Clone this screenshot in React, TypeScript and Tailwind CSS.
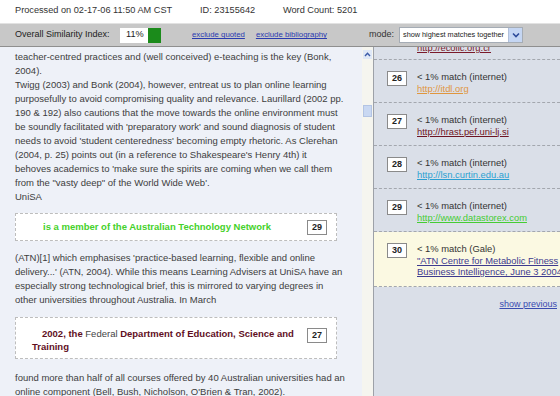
import React from "react";

const NumBox = ({ n }: { n: string }) => (
  <span className="inline-flex w-[20px] h-[15px] shrink-0 items-center justify-center border border-[#8a8a8a] bg-white text-[9px] font-bold leading-none text-[#222]">
    {n}
  </span>
);

const leftLines1 = [
  "teacher-centred practices and (well conceived) e-teaching is the key (Bonk,",
  "2004).",
  "Twigg (2003) and Bonk (2004), however, entreat us to plan online learning",
  "purposefully to avoid compromising quality and relevance. Laurillard (2002 pp.",
  "190 & 192) also cautions that the move towards the online environment must",
  "be soundly facilitated with 'preparatory work' and sound diagnosis of student",
  "needs to avoid 'student centeredness' becoming empty rhetoric. As Clerehan",
  "(2004, p. 25) points out (in a reference to Shakespeare's Henry 4th) it",
  "behoves academics to 'make sure the spirits are coming when we call them",
  "from the \"vasty deep\" of the World Wide Web'.",
  "UniSA",
];
const leftLines2 = [
  "(ATN)[1] which emphasises 'practice-based learning, flexible and online",
  "delivery...' (ATN, 2004). While this means Learning Advisers at UniSA have an",
  "especially strong technological brief, this is mirrored to varying degrees in",
  "other universities throughout Australia. In March",
];
const leftLines3 = [
  "found more than half of all courses offered by 40 Australian universities had an",
  "online component (Bell, Bush, Nicholson, O'Brien & Tran, 2002).",
];

const items = [
  { n: "26", kind: "internet", lines: ["http://itdl.org"], color: "text-[#e0963f]", yellow: false },
  { n: "27", kind: "internet", lines: ["http://hrast.pef.uni-lj.si"], color: "text-[#6e1423]", yellow: false },
  { n: "28", kind: "internet", lines: ["http://lsn.curtin.edu.au"], color: "text-[#2b9fd2]", yellow: false },
  { n: "29", kind: "internet", lines: ["http://www.datastorex.com"], color: "text-[#45cc34]", yellow: false },
  {
    n: "30",
    kind: "Gale",
    lines: ["\"ATN Centre for Metabolic Fitness", "Business Intelligence, June 3 2004"],
    color: "text-[#3d3a8f]",
    yellow: true,
  },
];

export default function App() {
  return (
    <div
      className="w-[560px] h-[396px] overflow-hidden bg-white flex flex-col"
      style={{ fontFamily: '"Liberation Sans", Arial, sans-serif' }}
    >
      {/* top info row */}
      <div className="h-[23px] shrink-0 flex items-center pl-[15px] pb-[2px] text-[9.2px] text-[#333] whitespace-nowrap">
        <span className="w-[185px]">Processed on 02-17-06 11:50 AM CST</span>
        <span className="w-[83px]">ID: 23155642</span>
        <span>Word Count: 5201</span>
      </div>

      {/* gray bar */}
      <div className="h-[24px] shrink-0 flex items-center bg-[#c8c8c8] border-t border-t-[#e2e2e2] border-b border-b-[#8f8f8f] pl-[15px] whitespace-nowrap">
        <span className="w-[105px] text-[9px] text-[#222]">Overall Similarity Index:</span>
        <span className="w-[28px] h-[15px] bg-white flex items-center pl-[6px] text-[9.2px] text-[#222]">11%</span>
        <span className="w-[13px] h-[15px] bg-[#1b8b1b]"></span>
        <a className="ml-[31px] text-[7.8px] text-[#2a3bb0] underline">exclude quoted</a>
        <a className="ml-[11px] text-[7.8px] text-[#2a3bb0] underline">exclude bibliography</a>
        <span className="ml-[42px] text-[9px] text-[#333]">mode:</span>
        <div className="ml-[5px] w-[124px] h-[16px] bg-white border border-[#a5acb5] flex items-center overflow-hidden">
          <span className="flex-1 pl-[3px] text-[7.3px] text-[#222]">show highest matches together</span>
          <span className="w-[14px] h-[14px] shrink-0 bg-[#c5d6f3] border-l border-[#b0bfda] flex items-center justify-center">
            <svg width="8" height="6" viewBox="0 0 8 6">
              <path d="M1 1.5 L4 4.5 L7 1.5" stroke="#2d4b9a" strokeWidth="1.6" fill="none" />
            </svg>
          </span>
        </div>
      </div>

      {/* main */}
      <div className="flex flex-1 min-h-0">
        {/* left document */}
        <div className="w-[362px] shrink-0 bg-[#eef1f8] overflow-hidden pl-[15px] pt-[3px] text-[9.5px] leading-[14px] text-[#3d3d3d] whitespace-nowrap">
          {leftLines1.map((l, i) => (
            <div key={i}>{l}</div>
          ))}
          <div className="mt-[9px] w-[322px] h-[28px] border border-dashed border-[#bdbdbd] bg-white flex items-center pl-[27px] pr-[9px]">
            <span className="flex-1 text-[9.5px] font-bold text-[#45d12a]">is a member of the Australian Technology Network</span>
            <NumBox n="29" />
          </div>
          <div className="mt-[10px]">
            {leftLines2.map((l, i) => (
              <div key={i}>{l}</div>
            ))}
          </div>
          <div className="mt-[10px] w-[322px] h-[42px] border border-dashed border-[#bdbdbd] bg-white flex items-start pt-[9px] pl-[16px] pr-[9px]">
            <div className="flex-1 text-[9.5px] leading-[13px] font-bold text-[#5f0f1e]">
              <div className="pl-[10px]">
                2002, the <span className="font-normal text-[#444]">Federal</span> Department of Education, Science and
              </div>
              <div>Training</div>
            </div>
            <div className="mt-[1px]">
              <NumBox n="27" />
            </div>
          </div>
          <div className="mt-[12px]">
            {leftLines3.map((l, i) => (
              <div key={i}>{l}</div>
            ))}
          </div>
        </div>

        {/* scrollbar */}
        <div className="w-[11px] shrink-0 bg-[#f5f5ef] flex flex-col items-center pt-[3px]">
          <div className="w-[9px] h-[9px] bg-[#dfe8f7] flex items-center justify-center">
            <svg width="7" height="5" viewBox="0 0 7 5">
              <path d="M1 4 L3.5 1.3 L6 4" stroke="#3a5aa8" strokeWidth="1.4" fill="none" />
            </svg>
          </div>
          <div className="mt-[46px] w-[9px] h-[12px] bg-[#c9d8f2] border border-[#b3c4e4]"></div>
        </div>

        {/* right match list */}
        <div className="flex-1 bg-[#dadfe8] border-l border-[#9da1a8] overflow-hidden text-[9.4px] whitespace-nowrap">
          <div className="h-[13px] overflow-hidden flex flex-col justify-end border-b border-dashed border-[#a3a7ae] pl-[43px] pb-[5px]">
            <div className="leading-[12px] text-[#7a1a2a] underline">http://ecolic.org.cr</div>
          </div>
          {items.map((it) => (
            <div
              key={it.n}
              className={`flex pl-[13px] pt-[11px] pb-[8px] border-b border-dashed border-[#a3a7ae] ${it.yellow ? "bg-[#fbf9e2]" : ""}`}
            >
              <NumBox n={it.n} />
              <div className="ml-[10px] leading-[11.5px]">
                <div className="text-[#333]">&lt; 1% match ({it.kind})</div>
                {it.lines.map((l, i) => (
                  <div key={i} className={`${it.color} underline`}>
                    {l}
                  </div>
                ))}
              </div>
            </div>
          ))}
          <div className="mt-[11px] pr-[3px] text-right text-[9px] text-[#3a4bb0] underline">show previous</div>
        </div>
      </div>
    </div>
  );
}
